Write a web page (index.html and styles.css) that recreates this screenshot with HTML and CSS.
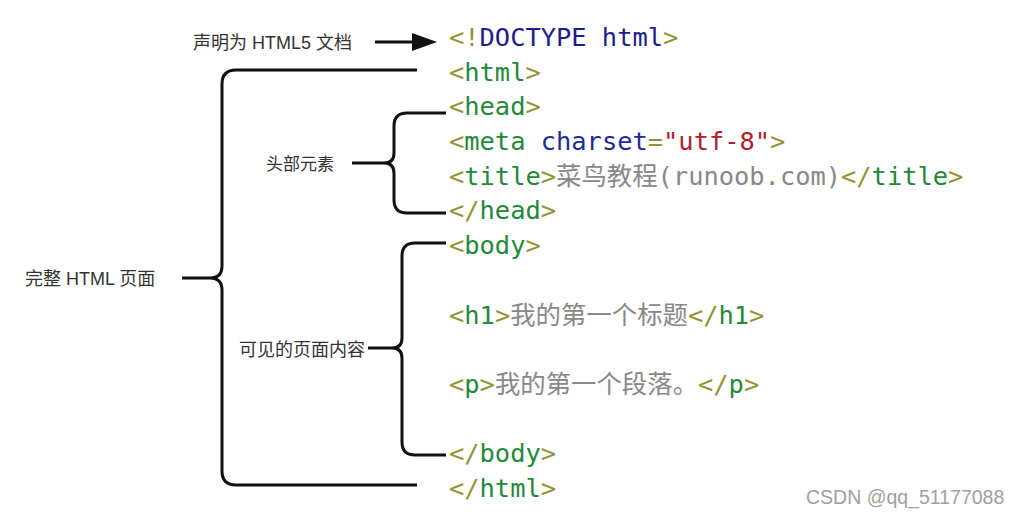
FILE: index.html
```html
<!DOCTYPE html>
<html lang="zh">
<head>
<meta charset="utf-8">
<title>HTML 结构</title>
<link rel="stylesheet" href="styles.css">
</head>
<body>
<div class="page">
  <div class="canvas">
    <svg class="lines" width="449" height="519" viewBox="0 0 449 519">
      <g fill="none" stroke="#111" stroke-width="3" stroke-linecap="butt">
        <line x1="375" y1="42" x2="418" y2="42"/>
        <path d="M417 70 H236 Q222 70 222 84 V266 Q222 278 210 278 H182 M210 278 Q222 278 222 290 V471 Q222 485 236 485 H417"/>
        <path d="M446 113 H407 Q394 113 394 126 V153 Q394 163 384 163 H352 M384 163 Q394 163 394 173 V200 Q394 213 407 213 H446"/>
        <path d="M446 243 H415 Q402 243 402 256 V338 Q402 348 392 348 H368 M392 348 Q402 348 402 358 V442 Q402 455 415 455 H446"/>
      </g>
      <polygon points="412,33 437,42 412,51" fill="#111"/>
    </svg>
    <span class="label l-doc">声明为 HTML5 文档</span>
    <span class="label l-head">头部元素</span>
    <span class="label l-page">完整 HTML 页面</span>
    <span class="label l-body">可见的页面内容</span>
  </div>
  <div class="code">
    <div class="ln"><span class="br">&lt;!</span><span class="dt">DOCTYPE html</span><span class="br">&gt;</span></div>
    <div class="ln"><span class="br">&lt;</span><span class="tg">html</span><span class="br">&gt;</span></div>
    <div class="ln"><span class="br">&lt;</span><span class="tg">head</span><span class="br">&gt;</span></div>
    <div class="ln"><span class="br">&lt;</span><span class="tg">meta</span> <span class="at">charset</span><span class="br">=</span><span class="st">"utf-8"</span><span class="br">&gt;</span></div>
    <div class="ln"><span class="br">&lt;</span><span class="tg">title</span><span class="br">&gt;</span><span class="tx">菜鸟教程(runoob.com)</span><span class="br">&lt;/</span><span class="tg">title</span><span class="br">&gt;</span></div>
    <div class="ln"><span class="br">&lt;/</span><span class="tg">head</span><span class="br">&gt;</span></div>
    <div class="ln"><span class="br">&lt;</span><span class="tg">body</span><span class="br">&gt;</span></div>
    <div class="ln">&nbsp;</div>
    <div class="ln"><span class="br">&lt;</span><span class="tg">h1</span><span class="br">&gt;</span><span class="tx">我的第一个标题</span><span class="br">&lt;/</span><span class="tg">h1</span><span class="br">&gt;</span></div>
    <div class="ln">&nbsp;</div>
    <div class="ln"><span class="br">&lt;</span><span class="tg">p</span><span class="br">&gt;</span><span class="tx">我的第一个段落。</span><span class="br">&lt;/</span><span class="tg">p</span><span class="br">&gt;</span></div>
    <div class="ln">&nbsp;</div>
    <div class="ln"><span class="br">&lt;/</span><span class="tg">body</span><span class="br">&gt;</span></div>
    <div class="ln"><span class="br">&lt;/</span><span class="tg">html</span><span class="br">&gt;</span></div>
  </div>
  <span class="mark">CSDN @qq_51177088</span>
</div>
</body>
</html>
```

FILE: styles.css
```css
html, body {
  margin: 0;
  padding: 0;
  background: #fff;
}
.page {
  position: relative;
  width: 1021px;
  height: 519px;
  display: flex;
  overflow: hidden;
}
.canvas {
  position: relative;
  width: 449px;
  height: 519px;
  flex: none;
}
.lines {
  position: absolute;
  left: 0;
  top: 0;
}
.label {
  position: absolute;
  font-family: "Liberation Sans", "Noto Sans CJK SC", sans-serif;
  font-size: 18px;
  line-height: 20px;
  color: #333;
  white-space: nowrap;
}
.l-doc { left: 193px; top: 33px; }
.l-head { left: 266px; top: 155px; font-size: 17px; }
.l-page { left: 25px; top: 269px; }
.l-body { left: 239px; top: 340px; }
.code {
  padding-top: 20px;
  font-family: "DejaVu Sans Mono", "Noto Sans CJK SC", monospace;
  font-size: 25.4px;
  line-height: 34.7px;
}
.ln {
  height: 34.7px;
  white-space: pre;
}
.br { color: #939334; }
.tg { color: #23893a; }
.dt { color: #1d1d8a; }
.at { color: #1f2a99; }
.st { color: #b0202e; }
.tx { color: #888; }
.mark {
  position: absolute;
  left: 806px;
  top: 487px;
  font-family: "Liberation Sans", sans-serif;
  font-size: 19.5px;
  line-height: 20px;
  color: #a0a0a0;
}
```
